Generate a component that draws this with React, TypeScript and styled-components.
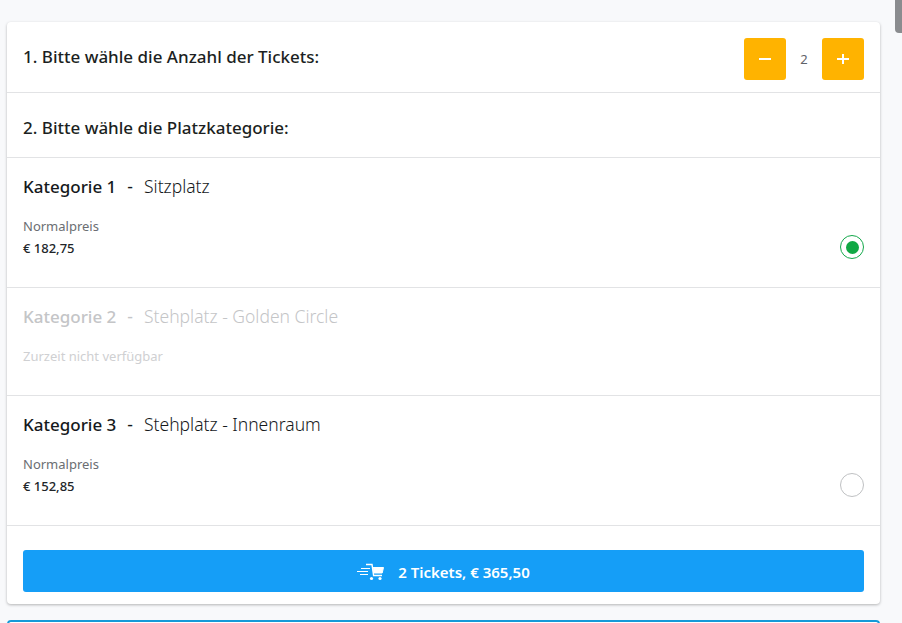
import React from "react";
import styled, { createGlobalStyle } from "styled-components";

const Global = createGlobalStyle`
  html, body { margin: 0; padding: 0; height: 623px; overflow: hidden; background: #f8f9fb; }
  body { font-family: "Noto Sans", "Open Sans", sans-serif; color: #212529; }
  * { box-sizing: border-box; }
`;

const Page = styled.div`
  width: 902px;
  height: 623px;
  padding: 22px 22px 0 7px;
  overflow: hidden;
  display: flex;
  flex-direction: column;
  gap: 16px;
`;

const Thumb = styled.div`
  position: fixed;
  top: 0;
  right: 0;
  width: 7px;
  height: 33px;
  background: #8a8c8f;
  border-radius: 0 0 0 4px;
`;

const Card = styled.div`
  flex: none;
  background: #fff;
  border-radius: 4px;
  box-shadow: 0 1px 3px rgba(0, 0, 0, 0.28);
`;

const HeaderRow = styled.div<{ $h: number }>`
  height: ${(p) => p.$h}px;
  padding: 0 16px;
  display: flex;
  align-items: center;
  justify-content: space-between;
  border-bottom: 1px solid #e2e3e5;
`;

const Title = styled.div<{ $shift: number }>`
  font-size: 17px;
  font-weight: 500;
  color: #1c1f22;
  margin-top: ${(p) => p.$shift}px;
`;

const Stepper = styled.div`
  margin-top: 4px;
  display: flex;
  align-items: center;
`;

const StepButton = styled.button`
  width: 42px;
  height: 42px;
  padding: 0;
  border: 0;
  border-radius: 3px;
  background: #ffb300;
  display: flex;
  align-items: center;
  justify-content: center;
`;

const Count = styled.span`
  width: 36px;
  text-align: center;
  font-size: 13px;
  color: #5f6368;
`;

const CategoryRow = styled.div<{ $h: number }>`
  height: ${(p) => p.$h}px;
  padding: 15px 16px 0;
  border-bottom: 1px solid #e2e3e5;
  display: flex;
  flex-direction: column;
`;

const CategoryTitle = styled.div<{ $off?: boolean }>`
  font-size: 17.5px;
  line-height: 26px;
  font-weight: 300;
  color: ${(p) => (p.$off ? "#c4c5c7" : "#16191c")};
  white-space: pre;
`;

const CategoryName = styled.span`
  font-size: 17px;
  font-weight: 500;
  margin-right: 11px;
`;

const Separator = styled.span`
  margin-right: 11px;
  font-weight: 400;
`;

const PriceLine = styled.div`
  margin-top: 16px;
  display: flex;
  align-items: flex-end;
  justify-content: space-between;
`;

const PriceLabel = styled.div<{ $off?: boolean }>`
  font-size: 13px;
  line-height: 20px;
  color: ${(p) => (p.$off ? "#cfd0d2" : "#6b6e72")};
`;

const Price = styled.div`
  font-size: 13px;
  line-height: 20px;
  margin-top: 2px;
  font-weight: 500;
  color: #212529;
`;

const Radio = styled.span<{ $on?: boolean }>`
  width: 24px;
  height: 24px;
  margin-bottom: -1px;
  border-radius: 50%;
  border: ${(p) => (p.$on ? "1.5px solid #13a84a" : "1px solid #bfc1c3")};
  display: flex;
  align-items: center;
  justify-content: center;
  &::after {
    content: "";
    display: ${(p) => (p.$on ? "block" : "none")};
    width: 13px;
    height: 13px;
    border-radius: 50%;
    background: #10a844;
  }
`;

const Footer = styled.div`
  height: 78px;
  padding: 24px 16px 12px;
`;

const BuyButton = styled.button`
  width: 100%;
  height: 42px;
  padding: 1px 0 0;
  border: 0;
  border-radius: 3px;
  background: #159ef7;
  color: #fff;
  font-family: inherit;
  font-size: 15px;
  font-weight: 600;
  display: flex;
  align-items: center;
  justify-content: center;
  gap: 13px;
`;

const NextCard = styled.div`
  flex: none;
  height: 40px;
  background: #fff;
  border: 2px solid #159ad8;
  border-radius: 4px;
`;

const Cart = () => (
  <svg width="28" height="18" viewBox="0 0 28 18" fill="none" stroke="#fff">
    <path d="M4 5.5h9M0 8.5h11M3 11.5h8" strokeWidth="1.2" />
    <path d="M9 1.5h6l1.6 11h8.4" strokeWidth="1.4" />
    <path d="M16 4.5h10.5l-1.3 5.5H16.6z" fill="#fff" strokeWidth="1" />
    <circle cx="14.5" cy="15.5" r="1.6" fill="#fff" stroke="none" />
    <circle cx="23" cy="15.5" r="1.6" fill="#fff" stroke="none" />
  </svg>
);

const Glyph = ({ plus }: { plus?: boolean }) => (
  <svg width="12" height="12" viewBox="0 0 12 12" stroke="#fff" strokeWidth="2">
    <path d="M0 6h12" />
    {plus && <path d="M6 1v10" />}
  </svg>
);

export default function App() {
  return (
    <Page>
      <Global />
      <Thumb />
      <Card>
        <HeaderRow $h={71}>
          <Title $shift={-1}>1. Bitte wähle die Anzahl der Tickets:</Title>
          <Stepper>
            <StepButton aria-label="weniger"><Glyph /></StepButton>
            <Count>2</Count>
            <StepButton aria-label="mehr"><Glyph plus /></StepButton>
          </Stepper>
        </HeaderRow>
        <HeaderRow $h={65}>
          <Title $shift={4}>2. Bitte wähle die Platzkategorie:</Title>
        </HeaderRow>
        <CategoryRow $h={130}>
          <CategoryTitle><CategoryName>Kategorie 1</CategoryName><Separator>-</Separator>Sitzplatz</CategoryTitle>
          <PriceLine>
            <div>
              <PriceLabel>Normalpreis</PriceLabel>
              <Price>€ 182,75</Price>
            </div>
            <Radio $on />
          </PriceLine>
        </CategoryRow>
        <CategoryRow $h={108}>
          <CategoryTitle $off><CategoryName>Kategorie 2</CategoryName><Separator>-</Separator>Stehplatz - Golden Circle</CategoryTitle>
          <PriceLine>
            <PriceLabel $off>Zurzeit nicht verfügbar</PriceLabel>
          </PriceLine>
        </CategoryRow>
        <CategoryRow $h={130}>
          <CategoryTitle><CategoryName>Kategorie 3</CategoryName><Separator>-</Separator>Stehplatz - Innenraum</CategoryTitle>
          <PriceLine>
            <div>
              <PriceLabel>Normalpreis</PriceLabel>
              <Price>€ 152,85</Price>
            </div>
            <Radio />
          </PriceLine>
        </CategoryRow>
        <Footer>
          <BuyButton><Cart />2 Tickets, € 365,50</BuyButton>
        </Footer>
      </Card>
      <NextCard />
    </Page>
  );
}
